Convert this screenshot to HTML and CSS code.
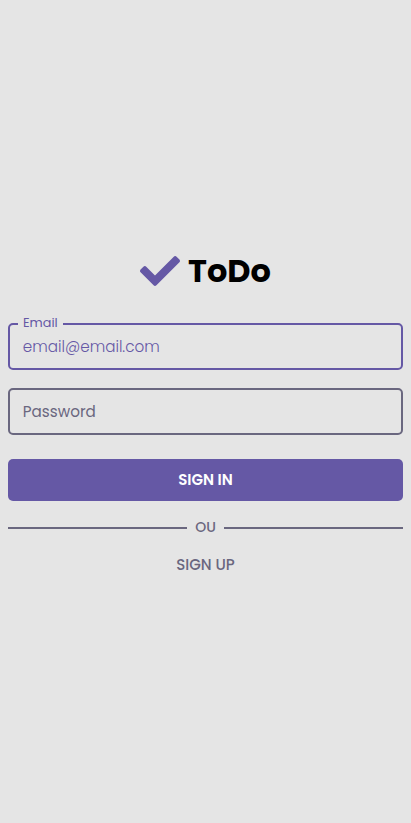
FILE: index.html
```html
<!DOCTYPE html>
<html lang="en">
<head>
<meta charset="utf-8">
<meta name="viewport" content="width=device-width, initial-scale=1">
<title>ToDo</title>
<link rel="stylesheet" href="styles.css">
</head>
<body>
<main class="login">
  <h1 class="brand">
    <svg class="brand-icon" viewBox="0 0 512 512" aria-hidden="true"><path d="M173.898 439.404l-166.4-166.4c-9.997-9.997-9.997-26.206 0-36.204l36.203-36.204c9.997-9.998 26.207-9.998 36.204 0L192 312.69 432.095 72.596c9.997-9.997 26.207-9.997 36.204 0l36.203 36.204c9.997 9.997 9.997 26.206 0 36.204l-294.4 294.401c-9.998 9.997-26.207 9.997-36.204-.001z"/></svg>
    <span class="brand-name">ToDo</span>
  </h1>
  <form class="form">
    <div class="field field-active"><span class="label">Email</span><span class="value">email@email.com</span></div>
    <div class="field"><span class="placeholder">Password</span></div>
    <button class="submit" type="button"><span class="submit-text">SIGN IN</span></button>
  </form>
  <div class="divider"><span class="divider-text">OU</span></div>
  <a class="signup"><span class="signup-text">SIGN UP</span></a>
</main>
</body>
</html>
```
FILE: styles.css
```css
* { box-sizing: border-box; }
body {
  margin: 0;
  min-height: 100vh;
  background: #e5e5e5;
  color: #6a677f;
  font-family: Poppins, "Open Sans", sans-serif;
  font-size: 15.2px;
}
.login { padding: 247px 8px 0; }
.brand {
  display: flex;
  align-items: center;
  justify-content: center;
  gap: 8px;
  height: 48px;
  margin: 0 0 28px;
  color: #000;
  font: 700 32px/48px Poppins, Inter, sans-serif;
}
.brand-icon { width: 40px; height: 40px; fill: #6558a5; }
.brand-name { white-space: nowrap; }
.form { display: flex; flex-direction: column; }
.field {
  position: relative;
  display: flex;
  align-items: center;
  height: 47px;
  margin-bottom: 18px;
  padding: 0 12.8px;
  border: 2px solid #6a677f;
  border-radius: 5px;
}
.field-active { border-color: #6558a5; color: #6558a5; }
.label {
  position: absolute;
  top: -10px;
  left: 8px;
  width: 45px;
  padding: 0 5px;
  background: #e5e5e5;
  font-size: 12.8px;
  line-height: 16px;
}
.value { font-weight: 300; }
.placeholder { font-weight: 400; }
.submit {
  height: 42px;
  margin-top: 6px;
  border: 0;
  border-radius: 5px;
  background: #6558a5;
  color: #fff;
  font: 600 15px/20px Poppins, Inter, sans-serif;
}
.divider {
  display: flex;
  align-items: center;
  gap: 8px;
  height: 20px;
  margin-top: 17px;
  font: 500 14px/20px Poppins, Inter, sans-serif;
}
.divider::before, .divider::after { content: ""; flex: 1; height: 2px; background: #6a677f; }
.divider-text { padding-bottom: 2px; line-height: 18px; }
.signup {
  display: block;
  margin-top: 17px;
  text-align: center;
  font: 500 15px/20px Poppins, Inter, sans-serif;
}
```
